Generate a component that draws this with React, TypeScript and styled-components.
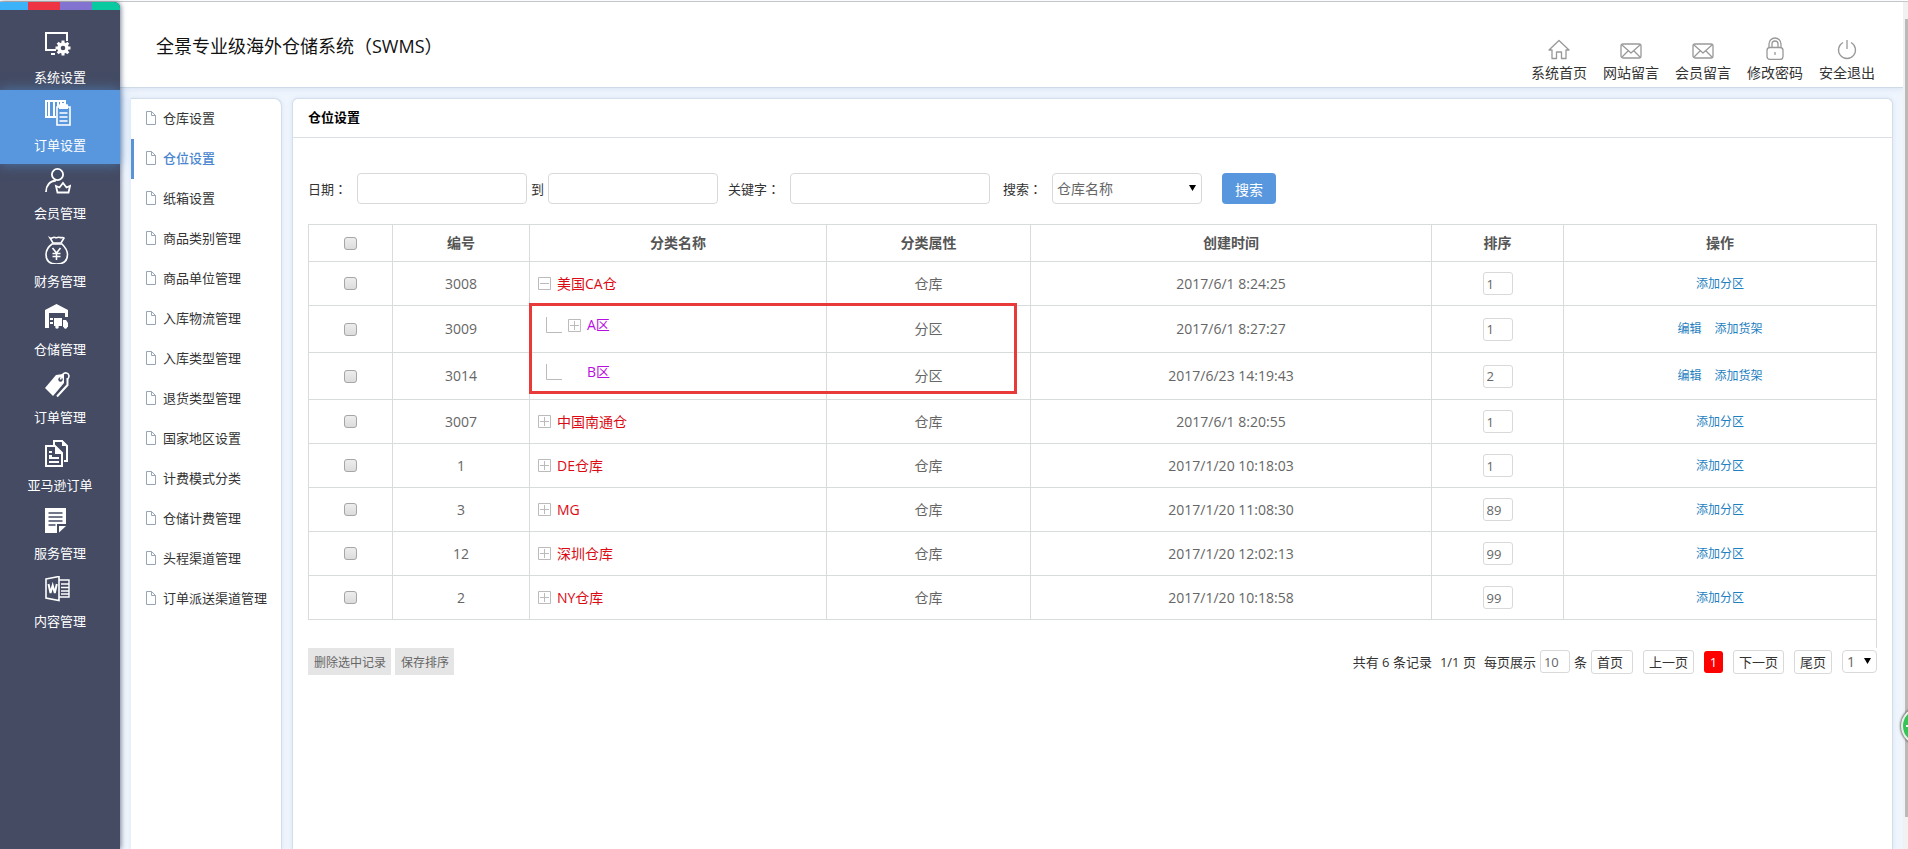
import React from 'react';
import styled, { createGlobalStyle, css } from 'styled-components';

const sans = `'Open Sans', 'Noto Sans CJK SC', sans-serif`;

const Global = createGlobalStyle`
  * { box-sizing: border-box; }
  html, body, #root { height: 100%; }
  body { margin: 0; font: 13px/20px ${sans}; color: #333; background: #eff5fd; overflow: hidden; }
  a { text-decoration: none; color: inherit; }
  input, select, button { font-family: inherit; margin: 0; }
  svg { display: block; }
`;

const Page = styled.div`
  min-height: 100vh;
  display: flex;
  border-top: 1px solid #fff;
  box-shadow: inset 0 1px 0 #c8c8c8;
  padding-top: 1px;
`;

const Sidebar = styled.nav`
  position: relative;
  z-index: 2;
  width: 120px;
  flex: none;
  background: #444b63;
  border-top-right-radius: 6px;
  box-shadow: 1px 0 5px rgba(40, 48, 80, 0.6);
`;

const Stripe = styled.div`
  display: flex;
  height: 8px;
  border-top-right-radius: 6px;
  overflow: hidden;
`;

const StripePart = styled.i<{ $color: string; $width: number }>`
  width: ${p => p.$width}px;
  background: ${p => p.$color};
`;

const SideList = styled.ul`
  list-style: none;
  margin: 0;
  padding: 12px 0 0;
`;

const SideItem = styled.li<{ $active?: boolean }>`
  height: 68px;
  ${p =>
    p.$active &&
    css`
      height: 74px;
      margin-bottom: -6px;
      background: #5897dd;
      box-shadow: 0 0 12px rgba(85, 150, 221, 0.6);
    `}
`;

const SideLink = styled.a`
  display: block;
  padding-top: 10px;
  color: #fff;
  text-align: center;
  svg {
    width: 26px;
    height: 28px;
    margin: 0 0 7px 45px;
  }
`;

const Right = styled.div`
  flex: 1;
  min-width: 0;
  display: flex;
  flex-direction: column;
`;

const Header = styled.header`
  height: 86px;
  display: flex;
  justify-content: space-between;
  align-items: flex-start;
  padding: 0 20px 0 36px;
  background: #fff;
  border-bottom: 1px solid #cfdae8;
  box-shadow: 0 1px 5px rgba(150, 175, 215, 0.25);
`;

const SystemName = styled.h1`
  margin: 31px 0 0;
  font-size: 18px;
  line-height: 26px;
  font-weight: 400;
  color: #111;
`;

const QuickLinks = styled.nav`
  display: flex;
  padding-top: 34px;
`;

const QuickLink = styled.a`
  width: 72px;
  font-size: 14px;
  line-height: 20px;
  text-align: center;
  color: #333;
  svg {
    width: 24px;
    height: 24px;
    margin: 0 auto 3px;
  }
`;

const Body = styled.div`
  flex: 1;
  display: flex;
  gap: 10px;
  padding: 10px 10px 0 11px;
`;

const SubMenu = styled.ul`
  width: 151px;
  flex: none;
  margin: 0;
  padding: 0;
  list-style: none;
  background: #fff;
  border: solid #d3deeb;
  border-width: 1px 1px 0 0;
  border-top-right-radius: 8px;
  box-shadow: 0 0 4px rgba(150, 175, 215, 0.25);
`;

const SubItem = styled.li<{ $active?: boolean }>`
  height: 40px;
  border-left: 3px solid ${p => (p.$active ? '#5b93d6' : 'transparent')};
  color: ${p => (p.$active ? '#4a86cf' : '#333')};
  font-weight: ${p => (p.$active ? 500 : 400)};
`;

const SubLink = styled.a`
  display: flex;
  align-items: center;
  gap: 7px;
  height: 38px;
  padding-left: 12px;
  white-space: nowrap;
  svg { flex: none; }
`;

const Card = styled.main`
  flex: 1;
  min-width: 0;
  background: #fff;
  border: 1px solid #d3deeb;
  border-bottom: 0;
  border-radius: 6px 6px 0 0;
  box-shadow: 0 0 4px rgba(150, 175, 215, 0.25);
`;

const CardTitle = styled.h2`
  margin: 0;
  height: 39px;
  padding: 0 15px;
  font-size: 13px;
  line-height: 37px;
  font-weight: 700;
  color: #000;
  border-bottom: 1px solid #dbe0e6;
`;

const CardBody = styled.div`
  padding: 35px 15px 0;
`;

const SearchForm = styled.form`
  display: flex;
  align-items: center;
  margin-bottom: 20px;
  color: #333;
`;

const Field = styled.label<{ $gap: number; $after: number }>`
  display: flex;
  align-items: center;
  gap: ${p => p.$gap}px;
  margin-right: ${p => p.$after}px;
  white-space: nowrap;
`;

const Colon = styled.span`
  font-family: 'Noto Sans CJK TC', sans-serif;
`;

const control = css`
  border: 1px solid #d9d9d9;
  border-radius: 4px;
  background: #fff;
  color: #666;
  outline: none;
`;

const TextInput = styled.input<{ $width: number }>`
  ${control}
  width: ${p => p.$width}px;
  height: 31px;
  padding: 0 6px;
`;

const SelectWrap = styled.span`
  position: relative;
  display: inline-flex;
`;

const Caret = styled.svg`
  position: absolute;
  right: 6px;
  top: calc(50% - 5px);
  pointer-events: none;
`;

const Select = styled.select<{ $width: number; $height: number }>`
  ${control}
  appearance: none;
  width: ${p => p.$width}px;
  height: ${p => p.$height}px;
  padding: 0 4px;
  font-size: 14px;
`;

const SearchButton = styled.button`
  width: 54px;
  height: 31px;
  padding: 0;
  border: 0;
  border-radius: 4px;
  background: #5897dd;
  color: #fff;
  font-size: 14px;
`;

const TableWrap = styled.div`
  position: relative;
`;

const Table = styled.table`
  width: 100%;
  table-layout: fixed;
  border-collapse: collapse;
  font-size: 14px;
  color: #666;
  text-align: center;
  th, td {
    border: 1px solid #d9dcdc;
    padding: 0;
  }
  th {
    height: 37px;
    color: #555;
  }
  input { vertical-align: middle; }
`;

const Row = styled.tr<{ $child?: boolean }>`
  height: ${p => (p.$child ? 47 : 44)}px;
`;

const NameCell = styled.div<{ $child?: boolean }>`
  display: flex;
  align-items: center;
  gap: 6px;
  padding-left: ${p => (p.$child ? 16 : 8)}px;
  margin-bottom: ${p => (p.$child ? 8 : 0)}px;
  color: ${p => (p.$child ? '#b90ee0' : '#dc0a14')};
`;

const Spacer = styled.span`
  width: 13px;
`;

const Toggle = styled.button`
  padding: 0;
  border: 0;
  background: none;
`;

const Check = styled.input`
  appearance: none;
  display: block;
  && { margin: 0 auto; }
  width: 13px;
  height: 13px;
  border: 1px solid #a6a6a6;
  border-radius: 3px;
  background: linear-gradient(#ededed, #dcdcdc);
`;

const SmallInput = styled.input`
  ${control}
  width: 30px;
  height: 23px;
  padding: 0 3px;
  font-size: 13px;
  border-radius: 3px;
`;

const Actions = styled.div`
  display: flex;
  justify-content: center;
  gap: 13px;
  font-size: 12px;
  color: #1f7fbf;
`;

const Highlight = styled.div`
  position: absolute;
  left: 221px;
  top: 79px;
  width: 488px;
  height: 91px;
  border: 3px solid #e83a38;
  pointer-events: none;
`;

const TableTail = styled.div`
  height: 28px;
  border-right: 1px solid #d9dcdc;
`;

const Footer = styled.div`
  display: flex;
  justify-content: space-between;
  align-items: center;
`;

const Group = styled.div<{ $gap: number }>`
  display: flex;
  align-items: center;
  gap: ${p => p.$gap}px;
  white-space: nowrap;
`;

const GrayButton = styled.button`
  height: 27px;
  padding: 0 5px 0 6px;
  border: 0;
  background: #e5e5e5;
  color: #666;
  font-size: 12px;
`;

const PageSize = styled.label`
  display: flex;
  align-items: center;
  gap: 4px;
`;

const PageLink = styled.a<{ $wide?: boolean }>`
  height: 24px;
  padding: 0 ${p => (p.$wide ? 9 : 5)}px 0 5px;
  line-height: 22px;
  border: 1px solid #d9d9d9;
  border-radius: 3px;
`;

const CurrentPage = styled.span`
  width: 19px;
  height: 22px;
  line-height: 22px;
  text-align: center;
  border-radius: 3px;
  background: #fe0000;
  color: #fff;
`;

const Scrollbar = styled.div`
  width: 5px;
  flex: none;
  padding: 17px 0 32px 2px;
  background: #f1f1f1;
  display: flex;
`;

const Thumb = styled.div`
  flex: 1;
  background: #bababa;
`;

const Bubble = styled.button`
  position: fixed;
  z-index: 3;
  right: -31px;
  top: 707px;
  width: 38px;
  height: 38px;
  padding: 0 0 0 3px;
  border: 2px solid #e6f2e8;
  border-radius: 50%;
  background: #35c455;
  box-shadow: 0 0 2px 1px #777;
`;

const icons: Record<string, React.ReactNode> = {
  system: (
    <>
      <path d="M11 18H1V1h21v8" fill="none" stroke="#fff" strokeWidth="2" />
      <path d="M6 22h4" stroke="#fff" strokeWidth="2" />
      <circle cx="18" cy="16" r="4" fill="none" stroke="#fff" strokeWidth="3.4" />
      <g stroke="#fff" strokeWidth="3">
        <path d="M18 8.500v3M18 20.500v3M10.500 16h3M22.500 16h3M12.700 10.700l2 2M21.300 19.300l2 2M12.700 21.300l2-2M21.300 12.700l2-2" />
      </g>
    </>
  ),
  orderset: (
    <>
      <path d="M0 0h21v6h-2V2h-2v4h-2V2h-1v5h-2V2h-2v14h1v2H0zM2 2v14h1V2zm3 0v14h3V2z" fill="#fff" fillRule="evenodd" />
      <path d="M12 7h3V5h7v2h3v18H12z" fill="#5897dd" stroke="#fff" strokeWidth="1.600" />
      <path d="M14 5h2l1-2h3l1 2h2v4h-9z" fill="#fff" />
      <path d="M14.500 13h8M14.500 17h8M14.500 21h8" stroke="#fff" strokeWidth="1.500" />
    </>
  ),
  member: (
    <g fill="none" stroke="#fff" strokeWidth="1.800">
      <circle cx="12.500" cy="6.500" r="5.600" />
      <path d="M1 24c0-6 3-11 10-11.500" />
      <path d="M11 18l3.500 1.500 3.500-4.500 3.500 4.500 3.500-1.500-1.500 6.500h-11z" />
    </g>
  ),
  finance: (
    <g fill="none" stroke="#fff" strokeWidth="1.600">
      <path d="M5 2c2 1 3-1.500 5-.5 2 1 3-1 5 0 1.500.5 3-.5 4 .5L16 7H8z" />
      <path d="M7 8C3 11 1 14 1 18.500 1 25 5 28 11.500 28S22.500 25 22.500 18.500C22.500 14 20 11 17 8z" />
      <path d="M7.500 12l4 5 4-5M11.500 17v7M7.500 17.500h8M7.500 20.500h8" />
    </g>
  ),
  storage: (
    <>
      <path d="M0 6L11.500 0 23 6v7h-3V9H4v15H0z" fill="#fff" />
      <path d="M5 14h3v2H5zM5 18h3v2H5zM9 14h8v8H9zM18 16h3l2 3v4h-5z" fill="#fff" />
      <circle cx="12" cy="23" r="1.800" fill="#fff" />
      <circle cx="20.500" cy="23" r="1.800" fill="#fff" />
    </>
  ),
  order: (
    <>
      <path d="M0 16L11 3l7-1 1 1v8L8 24z" fill="#fff" />
      <path d="M22.500 6v7L12 24.500" fill="none" stroke="#fff" strokeWidth="2" />
      <circle cx="15.500" cy="7.500" r="2.200" fill="#444b63" />
      <path d="M15.500 7.500C17 2 19 .5 21.500 1S25 5 22.500 7" fill="none" stroke="#fff" strokeWidth="1.600" />
    </>
  ),
  amazon: (
    <g fill="none" stroke="#fff" strokeWidth="2">
      <path d="M9 5V1h8l5 5v15h-3" />
      <path d="M1 6h9l7 7v13H1z" />
      <path d="M17 0v6h6zM10 6v8h8z" fill="#fff" stroke="none" />
      <path d="M4 12h3M4 16h3M4 18h10M4 22h10" strokeWidth="1.800" />
    </g>
  ),
  service: (
    <>
      <path d="M0 0h21v16h-9v9H0z" fill="#fff" />
      <path d="M14 24.500V18h7z" fill="#fff" />
      <path d="M3.500 5h14M3.500 9h14M3.500 13h14M3.500 17h7" stroke="#444b63" strokeWidth="1.500" />
    </>
  ),
  content: (
    <g fill="none" stroke="#fff" strokeWidth="1.600">
      <path d="M1 3l13-2.500v24L1 22z" />
      <path d="M14 4h10v17H14M16 8h8M16 11.500h8M16 15h8M16 18h8" strokeWidth="1.400" />
      <path d="M3.500 8l2 9 2.200-7.500L9.800 17l2-9" strokeWidth="2" />
    </g>
  ),
};

const sideItems: [string, string][] = [
  ['system', '系统设置'],
  ['orderset', '订单设置'],
  ['member', '会员管理'],
  ['finance', '财务管理'],
  ['storage', '仓储管理'],
  ['order', '订单管理'],
  ['amazon', '亚马逊订单'],
  ['service', '服务管理'],
  ['content', '内容管理'],
];

const mail = (
  <>
    <rect x="2" y="8" width="20" height="14" rx="2" />
    <path d="M3 9l9 8 9-8M3 21l6-6M21 21l-6-6" />
  </>
);

const quickLinks: [string, React.ReactNode][] = [
  ['系统首页', <path key="h" d="M2 14L12 4.500 22 14h-3v8.500h-4.500V16h-5v6.500H5V14z" />],
  ['网站留言', mail],
  ['会员留言', mail],
  [
    '修改密码',
    <>
      <rect x="4" y="11.500" width="16" height="12" rx="3" />
      <path d="M6 11V8a6 6 0 0 1 12 0v3M9 11V8a3 3 0 0 1 6 0v3M12 16v3" />
    </>,
  ],
  ['安全退出', <path key="p" d="M12 4v9M8 6.500a8.500 8.500 0 1 0 8 0" />],
];

const subItems = [
  '仓库设置', '仓位设置', '纸箱设置', '商品类别管理', '商品单位管理', '入库物流管理', '入库类型管理',
  '退货类型管理', '国家地区设置', '计费模式分类', '仓储计费管理', '头程渠道管理', '订单派送渠道管理',
];

interface Item {
  id: string;
  name: string;
  time: string;
  sort: string;
  child?: boolean;
  toggle?: 'plus' | 'minus';
}

const rows: Item[] = [
  { id: '3008', name: '美国CA仓', time: '2017/6/1 8:24:25', sort: '1', toggle: 'minus' },
  { id: '3009', name: 'A区', time: '2017/6/1 8:27:27', sort: '1', child: true, toggle: 'plus' },
  { id: '3014', name: 'B区', time: '2017/6/23 14:19:43', sort: '2', child: true },
  { id: '3007', name: '中国南通仓', time: '2017/6/1 8:20:55', sort: '1', toggle: 'plus' },
  { id: '1', name: 'DE仓库', time: '2017/1/20 10:18:03', sort: '1', toggle: 'plus' },
  { id: '3', name: 'MG', time: '2017/1/20 11:08:30', sort: '89', toggle: 'plus' },
  { id: '12', name: '深圳仓库', time: '2017/1/20 12:02:13', sort: '99', toggle: 'plus' },
  { id: '2', name: 'NY仓库', time: '2017/1/20 10:18:58', sort: '99', toggle: 'plus' },
];

const columnWidths = [84, 137, 297, 204, undefined, 132, 313];

const FileIcon = () => (
  <svg width="10" height="14" viewBox="0 0 10 14" fill="none" stroke="#98a5b5">
    <path d="M.5.5h5l4 4v9h-9zM5.500.5v4h4" />
  </svg>
);

const ToggleIcon = ({ plus }: { plus: boolean }) => (
  <svg width="13" height="13" viewBox="0 0 13 13" fill="none" stroke="#bbb">
    <path d={`M.5.5h12v12H.5zM2 6.500h9${plus ? 'M6.500 2v9' : ''}`} />
  </svg>
);

const Branch = () => (
  <svg width="16" height="16" viewBox="0 0 16 16" fill="none" stroke="#bbb">
    <path d="M.5 0v15.500H16" />
  </svg>
);

const Arrow = () => (
  <Caret width="7" height="8" viewBox="0 0 7 8">
    <path d="M0 1h7L3.500 7z" fill="#000" />
  </Caret>
);

const FieldName = ({ text }: { text: string }) => (
  <span>
    {text}
    <Colon>：</Colon>
  </span>
);

export default function App() {
  return (
    <Page>
      <Global />
      <Sidebar>
        <Stripe>
          <StripePart $color="#3cb2f8" $width={28} />
          <StripePart $color="#ee3342" $width={32} />
          <StripePart $color="#8273d0" $width={32} />
          <StripePart $color="#08c9a0" $width={28} />
        </Stripe>
        <SideList>
          {sideItems.map(([icon, label]) => (
            <SideItem key={icon} $active={icon === 'orderset'}>
              <SideLink href="#">
                <svg viewBox="0 0 26 28">{icons[icon]}</svg>
                {label}
              </SideLink>
            </SideItem>
          ))}
        </SideList>
      </Sidebar>
      <Right>
        <Header>
          <SystemName>全景专业级海外仓储系统（SWMS）</SystemName>
          <QuickLinks>
            {quickLinks.map(([label, icon]) => (
              <QuickLink key={label} href="#">
                <svg viewBox="0 0 24 24" fill="none" stroke="#999" strokeWidth="1.300" strokeLinejoin="round">
                  {icon}
                </svg>
                {label}
              </QuickLink>
            ))}
          </QuickLinks>
        </Header>
        <Body>
          <SubMenu>
            {subItems.map(label => (
              <SubItem key={label} $active={label === '仓位设置'}>
                <SubLink href="#">
                  <FileIcon />
                  {label}
                </SubLink>
              </SubItem>
            ))}
          </SubMenu>
          <Card>
            <CardTitle>仓位设置</CardTitle>
            <CardBody>
              <SearchForm onSubmit={e => e.preventDefault()}>
                <Field $gap={10} $after={4}>
                  <FieldName text="日期" />
                  <TextInput $width={170} />
                </Field>
                <Field $gap={4} $after={10}>
                  到
                  <TextInput $width={170} />
                </Field>
                <Field $gap={10} $after={13}>
                  <FieldName text="关键字" />
                  <TextInput $width={200} />
                </Field>
                <Field $gap={10} $after={20}>
                  <FieldName text="搜索" />
                  <SelectWrap>
                    <Select $width={150} $height={31}>
                      <option>仓库名称</option>
                    </Select>
                    <Arrow />
                  </SelectWrap>
                </Field>
                <SearchButton>搜索</SearchButton>
              </SearchForm>
              <TableWrap>
                <Table>
                  <colgroup>
                    {columnWidths.map((w, i) => (
                      <col key={i} width={w} />
                    ))}
                  </colgroup>
                  <thead>
                    <tr>
                      <th><Check type="checkbox" aria-label="全选" /></th>
                      <th>编号</th>
                      <th>分类名称</th>
                      <th>分类属性</th>
                      <th>创建时间</th>
                      <th>排序</th>
                      <th>操作</th>
                    </tr>
                  </thead>
                  <tbody>
                    {rows.map(r => (
                      <Row key={r.id} $child={r.child}>
                        <td><Check type="checkbox" aria-label={r.name} /></td>
                        <td>{r.id}</td>
                        <td>
                          <NameCell $child={r.child}>
                            {r.child && <Branch />}
                            {r.toggle ? (
                              <Toggle type="button" aria-label={r.name}>
                                <ToggleIcon plus={r.toggle === 'plus'} />
                              </Toggle>
                            ) : (
                              <Spacer />
                            )}
                            <a href="#">{r.name}</a>
                          </NameCell>
                        </td>
                        <td>{r.child ? '分区' : '仓库'}</td>
                        <td>{r.time}</td>
                        <td><SmallInput defaultValue={r.sort} aria-label="排序" /></td>
                        <td>
                          <Actions>
                            {r.child && <a href="#">编辑</a>}
                            <a href="#">{r.child ? '添加货架' : '添加分区'}</a>
                          </Actions>
                        </td>
                      </Row>
                    ))}
                  </tbody>
                </Table>
                <Highlight />
              </TableWrap>
              <TableTail />
              <Footer>
                <Group $gap={4}>
                  <GrayButton>删除选中记录</GrayButton>
                  <GrayButton>保存排序</GrayButton>
                </Group>
                <Group $gap={10}>
                  <Group $gap={4}>
                    <Group $gap={8}>
                      <span>共有 6 条记录</span>
                      <span>1/1 页</span>
                      <PageSize>
                        每页展示
                        <SmallInput defaultValue="10" />
                        条
                      </PageSize>
                    </Group>
                    <PageLink href="#" $wide>首页</PageLink>
                  </Group>
                  <PageLink href="#">上一页</PageLink>
                  <CurrentPage>1</CurrentPage>
                  <PageLink href="#">下一页</PageLink>
                  <PageLink href="#">尾页</PageLink>
                  <SelectWrap>
                    <Select $width={35} $height={23} aria-label="页码">
                      <option>1</option>
                    </Select>
                    <Arrow />
                  </SelectWrap>
                </Group>
              </Footer>
            </CardBody>
          </Card>
        </Body>
      </Right>
      <Scrollbar>
        <Thumb />
      </Scrollbar>
      <Bubble aria-label="+">
        <svg width="8" height="8" viewBox="0 0 8 8" stroke="#fff" strokeWidth="2">
          <path d="M0 4h8M4 0v8" />
        </svg>
      </Bubble>
    </Page>
  );
}
